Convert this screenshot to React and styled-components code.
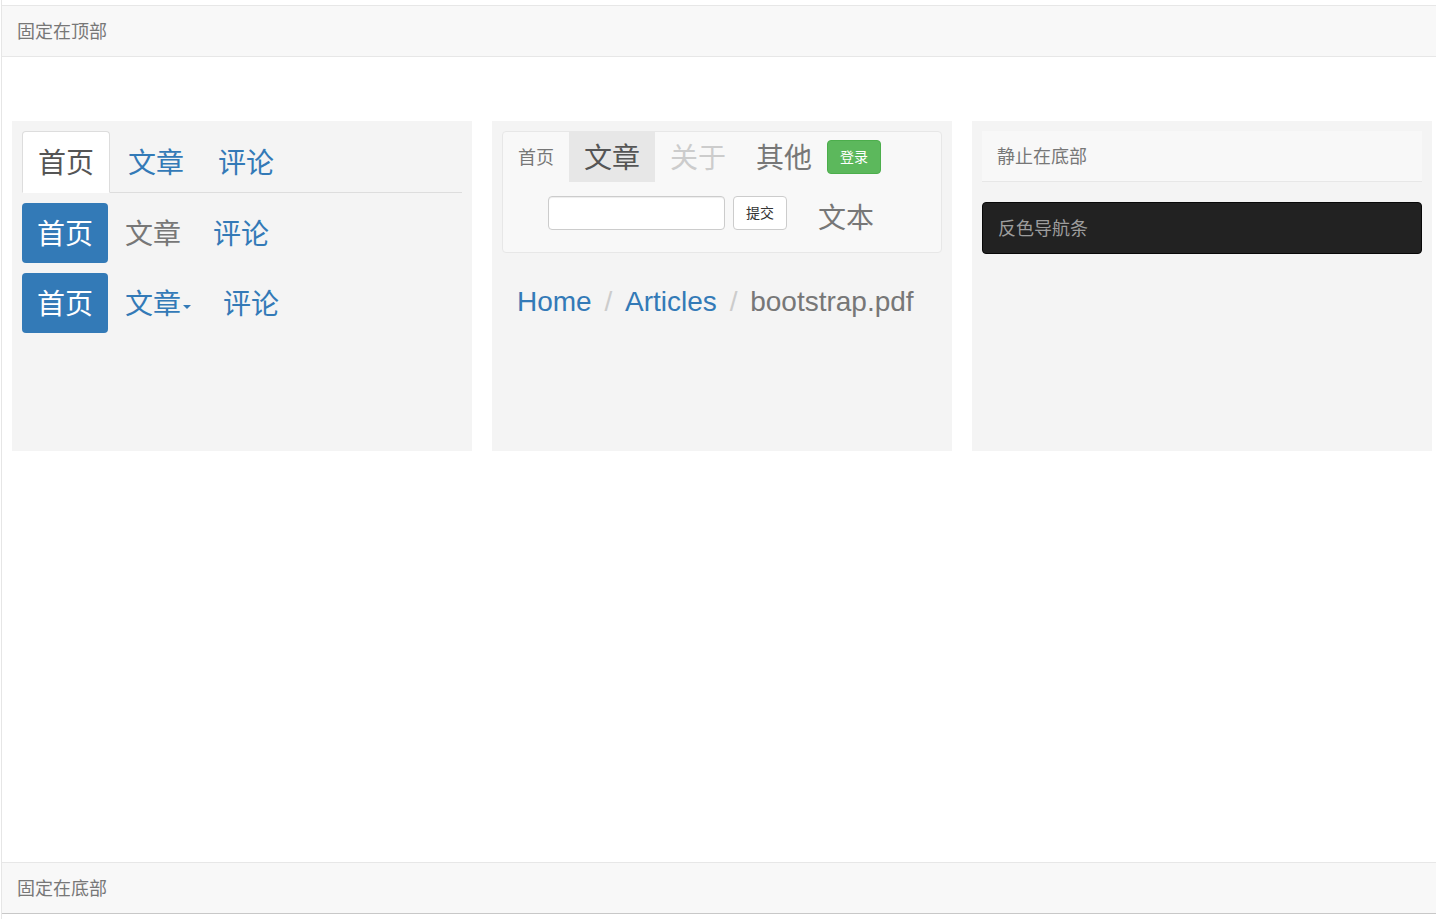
import React from "react";
import styled, { createGlobalStyle } from "styled-components";

const Global = createGlobalStyle`
  html, body { margin: 0; padding: 0; background: #fff; }
  body {
    font-family: "Liberation Sans", "Noto Sans CJK SC", sans-serif;
    font-size: 14px;
    line-height: 1.42857;
    color: #333;
  }
  * { box-sizing: border-box; }
`;

const Page = styled.div`
  height: 919px;
  padding-top: 5px;
  margin-left: 1px;
  border-left: 1px solid #e6e6e6;
  display: flex;
  flex-direction: column;
  overflow: hidden;
`;

const FixedBar = styled.div`
  height: 52px;
  flex: none;
  background: #f8f8f8;
  border-top: 1px solid #e7e7e7;
  border-bottom: 1px solid ${(p) => (p.$bottom ? "#c8c8c8" : "#e7e7e7")};
  display: flex;
  align-items: center;
`;

const Brand = styled.span`
  padding: 16px 15px 14px;
  font-size: 18px;
  line-height: 20px;
  color: ${(p) => (p.$inverse ? "#9d9d9d" : "#777")};
`;

const Main = styled.main`
  flex: 1;
  padding: 64px 0 0 10px;
`;

const Columns = styled.div`
  display: flex;
  gap: 20px;
`;

const Panel = styled.section`
  width: 460px;
  height: 330px;
  background: #f4f4f4;
  padding: 10px;
`;

const Tabs = styled.ul`
  list-style: none;
  margin: 0 0 10px;
  padding: 0;
  display: flex;
  border-bottom: 1px solid #ddd;
`;

const Tab = styled.li`
  margin: 0 2px -1px 0;
  padding: 12px 15px 8px;
  font-size: 28px;
  line-height: 40px;
  border: 1px solid ${(p) => (p.$active ? "#ddd" : "transparent")};
  border-bottom-color: transparent;
  border-radius: 4px 4px 0 0;
  background: ${(p) => (p.$active ? "#fff" : "transparent")};
  color: ${(p) => (p.$active ? "#555" : "#337ab7")};
`;

const Pills = styled.ul`
  list-style: none;
  margin: 0 0 10px;
  padding: 0;
  display: flex;
`;

const Pill = styled.li`
  margin-right: 2px;
  padding: 12px 15px 8px;
  font-size: 28px;
  line-height: 40px;
  border-radius: 4px;
  background: ${(p) => (p.$active ? "#337ab7" : "transparent")};
  color: ${(p) => (p.$active ? "#fff" : p.$muted ? "#777" : "#337ab7")};
  display: flex;
  align-items: center;
`;

const Caret = styled.span`
  display: inline-block;
  width: 0;
  height: 0;
  margin-left: 2px;
  margin-top: 4px;
  border-top: 4px solid currentColor;
  border-left: 4px solid transparent;
  border-right: 4px solid transparent;
`;

const NavBox = styled.nav`
  background: #f8f8f8;
  border: 1px solid #e7e7e7;
  border-radius: 4px;
  margin-bottom: 20px;
`;

const NavRow = styled.div`
  display: flex;
  align-items: flex-start;
  height: ${(p) => p.$h}px;
  padding-left: ${(p) => p.$pl || 0}px;
`;

const NavLink = styled.span`
  padding: ${(p) => (p.$small ? "16px 15px 14px" : "17px 15px 13px")};
  line-height: 20px;
  height: 50px;
  font-size: ${(p) => (p.$small ? 18 : 28)}px;
  color: ${(p) => (p.$active ? "#555" : p.$disabled ? "#ccc" : "#777")};
  background: ${(p) => (p.$active ? "#e7e7e7" : "transparent")};
  white-space: nowrap;
`;

const Button = styled.button`
  font-family: inherit;
  font-size: 14px;
  line-height: 20px;
  height: 34px;
  padding: 6px 12px;
  border-radius: 4px;
  border: 1px solid ${(p) => (p.$success ? "#4cae4c" : "#ccc")};
  background: ${(p) => (p.$success ? "#5cb85c" : "#fff")};
  color: ${(p) => (p.$success ? "#fff" : "#333")};
  margin-top: ${(p) => p.$mt || 0}px;
  margin-left: ${(p) => p.$ml || 0}px;
`;

const Input = styled.input`
  width: 177px;
  height: 34px;
  margin-top: 14px;
  border: 1px solid #ccc;
  border-radius: 4px;
  background: #fff;
  box-shadow: inset 0 1px 1px rgba(0, 0, 0, 0.075);
  padding: 6px 12px;
  font-family: inherit;
`;

const NavText = styled.span`
  font-size: 28px;
  line-height: 40px;
  color: #777;
  margin: 17px 0 0 31px;
`;

const Breadcrumb = styled.div`
  padding: 9px 15px 7px;
  font-size: 28px;
  line-height: 40px;
  white-space: nowrap;
`;

const Crumb = styled.span`
  color: ${(p) => (p.$current ? "#777" : "#337ab7")};
`;

const Sep = styled.span`
  color: #ccc;
  padding: 0 5px;
`;

const StaticBar = styled.div`
  height: 51px;
  background: #f8f8f8;
  border-bottom: 1px solid #e7e7e7;
  margin-bottom: 20px;
  display: flex;
  align-items: center;
`;

const InverseBar = styled.div`
  height: 52px;
  background: #222;
  border: 1px solid #080808;
  border-radius: 4px;
  display: flex;
  align-items: center;
`;

const BottomGap = styled.div`
  height: 5px;
  flex: none;
`;

export default function App() {
  return (
    <>
      <Global />
      <Page>
        <FixedBar>
          <Brand>固定在顶部</Brand>
        </FixedBar>
        <Main>
          <Columns>
            <Panel>
              <Tabs>
                <Tab $active>首页</Tab>
                <Tab>文章</Tab>
                <Tab>评论</Tab>
              </Tabs>
              <Pills>
                <Pill $active>首页</Pill>
                <Pill $muted>文章</Pill>
                <Pill>评论</Pill>
              </Pills>
              <Pills>
                <Pill $active>首页</Pill>
                <Pill>
                  文章<Caret />
                </Pill>
                <Pill>评论</Pill>
              </Pills>
            </Panel>
            <Panel>
              <NavBox>
                <NavRow $h={50}>
                  <NavLink $small>首页</NavLink>
                  <NavLink $active>文章</NavLink>
                  <NavLink $disabled>关于</NavLink>
                  <NavLink>其他</NavLink>
                  <Button $success $mt={8}>登录</Button>
                </NavRow>
                <NavRow $h={70} $pl={45}>
                  <Input type="text" />
                  <Button $mt={14} $ml={8}>提交</Button>
                  <NavText>文本</NavText>
                </NavRow>
              </NavBox>
              <Breadcrumb>
                <Crumb>Home</Crumb> <Sep>/{"\u00a0"}</Sep>
                <Crumb>Articles</Crumb> <Sep>/{"\u00a0"}</Sep>
                <Crumb $current>bootstrap.pdf</Crumb>
              </Breadcrumb>
            </Panel>
            <Panel>
              <StaticBar>
                <Brand>静止在底部</Brand>
              </StaticBar>
              <InverseBar>
                <Brand $inverse>反色导航条</Brand>
              </InverseBar>
            </Panel>
          </Columns>
        </Main>
        <FixedBar $bottom>
          <Brand>固定在底部</Brand>
        </FixedBar>
        <BottomGap />
      </Page>
    </>
  );
}
